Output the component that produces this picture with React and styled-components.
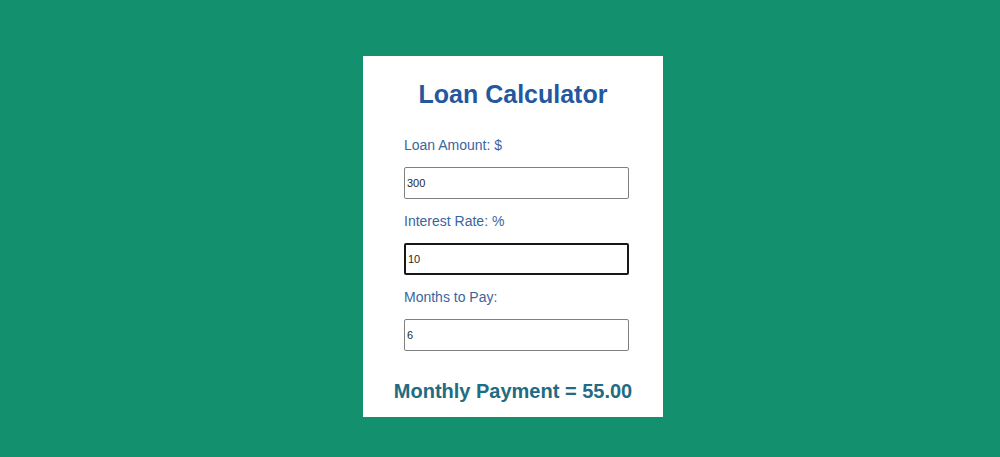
import { useState } from "react";
import styled, { createGlobalStyle } from "styled-components";

const GlobalStyle = createGlobalStyle`
    * {
        box-sizing: border-box;
    }

    body {
        margin: 0;
        background-color: rgb(19, 145, 111);
        font-family: "Liberation Sans", Arial, sans-serif;
    }
`;

const Page = styled.main`
    display: flex;
    justify-content: center;
    padding: 56px 0 40px 26px;
`;

const Card = styled.form`
    width: 300px;
    padding: 24px 0 14px;
    background-color: white;
`;

const Title = styled.h1`
    margin: 0 0 27px;
    font-size: 25px;
    line-height: 28px;
    text-align: center;
    color: rgb(36, 88, 158);
`;

const Fields = styled.div`
    display: flex;
    flex-direction: column;
    gap: 12px;
    padding: 0 34px 0 41px;
`;

const Field = styled.div`
    display: flex;
    flex-direction: column;
    gap: 12px;
`;

const Label = styled.label`
    font-size: 14px;
    line-height: 20px;
    color: rgb(58, 101, 158);
`;

const Input = styled.input`
    width: 100%;
    height: 32px;
    padding: 0 2px;
    border: ${(props) => (props.$active ? "2px solid rgb(24, 24, 28)" : "1px solid rgb(128, 128, 128)")};
    border-radius: 2px;
    outline: none;
    background-color: white;
    font-family: inherit;
    font-size: 11px;
    color: rgb(40, 40, 40);
`;

const Result = styled.h2`
    margin: 28px 0 0;
    font-size: 20px;
    line-height: 24px;
    text-align: center;
    color: rgb(34, 107, 130);
`;

const fields = [
    { name: "amount", label: "Loan Amount: $" },
    { name: "rate", label: "Interest Rate: %" },
    { name: "months", label: "Months to Pay:" }
];

const App = () => {
    const [values, setValues] = useState({ amount: "300", rate: "10", months: "6" });
    const [active, setActive] = useState("rate");

    const changeHandler = (event) => {
        setValues({ ...values, [event.target.name]: event.target.value });
    };

    // the interest is flat: a percentage of the amount, spread over the months
    const payment = (values.amount * (1 + values.rate / 100)) / values.months;

    return (
        <>
            <GlobalStyle />
            <Page>
                <Card>
                    <Title>Loan Calculator</Title>
                    <Fields>
                        {fields.map((field) => (
                            <Field key={field.name}>
                                <Label htmlFor={field.name}>{field.label}</Label>
                                <Input
                                    id={field.name}
                                    name={field.name}
                                    type="text"
                                    inputMode="decimal"
                                    value={values[field.name]}
                                    onChange={changeHandler}
                                    onFocus={() => setActive(field.name)}
                                    $active={active === field.name}
                                />
                            </Field>
                        ))}
                    </Fields>
                    <Result>Monthly Payment = {Number.isFinite(payment) ? payment.toFixed(2) : "0.00"}</Result>
                </Card>
            </Page>
        </>
    );
};

export default App;
